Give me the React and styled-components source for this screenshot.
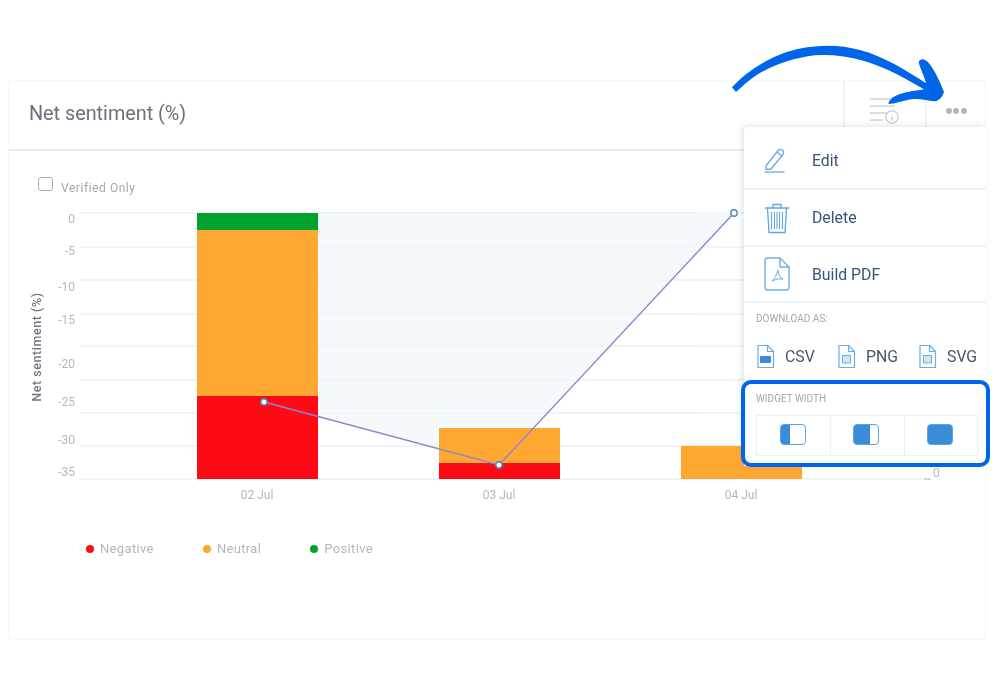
import React from 'react'
import styled, { createGlobalStyle } from 'styled-components'

const GlobalStyle = createGlobalStyle`
  html, body { margin: 0; padding: 0; background: #fff; }
  body { font-family: Roboto, "Liberation Sans", sans-serif; }
`

const Page = styled.div`
  width: 1000px;
  height: 700px;
  padding: 80px 0 0 8px;
  box-sizing: border-box;
  position: relative;
  overflow: hidden;
`

const Card = styled.div`
  width: 978px;
  height: 560px;
  box-sizing: border-box;
  border: 1px solid #f6f6f8;
  border-radius: 4px;
  position: relative;
  filter: blur(0.6px);
`

const Header = styled.div`
  height: 70px;
  box-sizing: border-box;
  display: flex;
  align-items: center;
  border-bottom: 2px solid #e8ecf0;
`

const Title = styled.h1`
  flex: 1;
  margin: 0 0 3px 20px;
  font-size: 19.8px;
  font-weight: 400;
  color: #69727c;
`

const HeaderCell = styled.div`
  width: ${p => p.$width}px;
  height: 100%;
  box-sizing: border-box;
  display: flex;
  justify-content: center;
  padding-top: 16px;
  border-left: 2px solid #eef1f5;
`

const Dots = styled.div`
  display: flex;
  gap: 1.5px;
  margin-top: 11px;
  height: 6px;
  & > i { width: 6px; height: 6px; border-radius: 50%; background: #b2b5ba; }
`

const FilterRow = styled.label`
  display: flex;
  align-items: center;
  gap: 8px;
  margin: 26px 0 13px 29px;
  height: 15px;
  font-size: 12px;
  letter-spacing: 0.55px;
  color: #a3a8ae;
  & > em { font-style: normal; padding-top: 6px; }
`

const Checkbox = styled.span`
  width: 13px;
  height: 12px;
  margin-top: -2px;
  border: 1.5px solid #a9adb2;
  border-radius: 3px;
  background: #fff;
`

const ChartSvg = styled.svg`
  display: block;
  width: 976px;
  height: 300px;
`

const AxisLabel = styled.text`
  font-size: 12px;
  fill: #b3b7bc;
`

const AxisTitle = styled.text`
  font-size: 12.5px;
  letter-spacing: 0.55px;
  font-weight: 500;
  fill: #6d7680;
`

const Legend = styled.div`
  display: flex;
  gap: 49px;
  margin: 36px 0 0 77px;
`

const LegendItem = styled.div`
  display: flex;
  align-items: center;
  gap: 6px;
  font-size: 13px;
  letter-spacing: 0.35px;
  color: #b3b7bc;
`

const LegendDot = styled.span`
  width: 8px;
  height: 8px;
  border-radius: 50%;
  background: ${p => p.$color};
`

const Menu = styled.div`
  position: absolute;
  top: 46px;
  right: -1px;
  width: 242px;
  height: 339px;
  background: #fff;
  border-radius: 4px 4px 0 0;
  box-shadow: -2px -1px 6px rgba(120, 130, 145, 0.22);
`

const MenuRow = styled.div`
  height: ${p => p.$height}px;
  box-sizing: border-box;
  display: flex;
  align-items: center;
  padding: ${p => p.$pushDown || 0}px 0 0 20px;
  border-bottom: 2px solid #eaf4f9;
  font-size: 15.8px;
  color: #34557a;
`

const RowIcon = styled.span`
  width: 48px;
  display: flex;
`

const SectionLabel = styled.div`
  padding-left: 12px;
  font-size: 10px;
  line-height: 12px;
  color: #a2a7ad;
  text-transform: uppercase;
`

const DownloadSection = styled.div`
  height: 77px;
  box-sizing: border-box;
  padding-top: 10px;
`

const DownloadRow = styled.div`
  display: grid;
  grid-template-columns: 81px 81px 1fr;
  padding-left: 12px;
  margin-top: 19px;
`

const DownloadItem = styled.div`
  display: flex;
  align-items: center;
  gap: 10px;
  font-size: 15.8px;
  color: #44566c;
`

const WidthSection = styled.div`
  padding-top: 13px;
`

const WidthGrid = styled.div`
  display: grid;
  grid-template-columns: repeat(3, 1fr);
  margin: 10px 8px 0 12px;
  height: 41px;
  box-sizing: border-box;
  border: 1px solid #e6f1f8;
`

const WidthCell = styled.div`
  display: flex;
  align-items: center;
  justify-content: center;
  padding: 0 2px 3px 0;
  & + & { border-left: 1px solid #e6f1f8; }
`

const WidthIcon = styled.span`
  width: 26px;
  height: 21px;
  box-sizing: border-box;
  border: 1.5px solid #5ba3e3;
  border-radius: 4px;
  background: linear-gradient(to right, #3a8cd9 ${p => p.$fill}%, #fff ${p => p.$fill}%);
`

const Highlight = styled.div`
  position: absolute;
  left: -3px;
  top: 253px;
  width: 249px;
  height: 87px;
  box-sizing: border-box;
  border: 4px solid #0065e8;
  border-radius: 10px;
  pointer-events: none;
`

const Arrow = styled.svg`
  position: absolute;
  left: 720px;
  top: 30px;
  width: 280px;
  height: 190px;
`

const GRID_Y = [213, 247, 280, 314, 346, 380, 413, 446, 479]
const TICKS = [['0', 223], ['-5', 255], ['-10', 291], ['-15', 324], ['-20', 368], ['-25', 406], ['-30', 444], ['-35', 476]]
const BARS = [
  { x: 197, label: '02 Jul', parts: [[213, 230, '#00a32e'], [230, 396, '#ffa733'], [396, 479, '#ff0a14']] },
  { x: 439, label: '03 Jul', parts: [[428, 463, '#ffa733'], [463, 479, '#ff0a14']] },
  { x: 681, label: '04 Jul', parts: [[446, 479, '#ffa733']] },
]
const LINE = [[264, 402], [499, 465], [734, 213]]
const LEGEND = [['Negative', '#ff0a14'], ['Neutral', '#ffa733'], ['Positive', '#00a32e']]

const Chart = () => (
  <ChartSvg viewBox="9 205 976 300">
    {GRID_Y.map(y => <line key={y} x1="80" x2="930" y1={y} y2={y} stroke="#eef0f3" strokeWidth="1.6" />)}
    <polygon points="264,213 734,213 499,465 264,402" fill="#f5f9fc" />
    {GRID_Y.map(y => <line key={y} x1="318" x2="700" y1={y} y2={y} stroke="#edf1f5" strokeWidth="1.2" />)}
    {TICKS.map(([t, y]) => <AxisLabel key={t} x="75" y={y} textAnchor="end">{t}</AxisLabel>)}
    <AxisTitle transform="translate(41 347) rotate(-90)" textAnchor="middle">Net sentiment (%)</AxisTitle>
    {BARS.map(b => (
      <g key={b.label}>
        {b.parts.map(([y1, y2, c]) => <rect key={c} x={b.x} y={y1} width="121" height={y2 - y1} fill={c} />)}
        <AxisLabel x={b.x + 60} y="499" textAnchor="middle">{b.label}</AxisLabel>
      </g>
    ))}
    <polyline points={LINE.join(' ')} fill="none" stroke="#8f86c9" strokeWidth="1.4" />
    {LINE.map(([x, y]) => <circle key={x} cx={x} cy={y} r="3.2" fill="#fff" stroke="#4d86b8" strokeWidth="1.4" />)}
    <AxisLabel x="933" y="477">0</AxisLabel>
    <line x1="924" x2="931" y1="479" y2="479" stroke="#b5b9be" strokeWidth="1" />
  </ChartSvg>
)

const ListInfoIcon = () => (
  <svg width="32" height="28" viewBox="0 0 32 28" fill="none" stroke="#d0d3d7" strokeWidth="1.5">
    <path d="M1 2h25M1 9h25M1 16h17M1 23h13" />
    <circle cx="23" cy="20" r="6.2" />
    <path d="M23 17.5v.6M23 19.5v4" />
  </svg>
)

const PencilIcon = () => (
  <svg width="22" height="26" viewBox="0 0 22 26" fill="none" stroke="#65aae4" strokeWidth="1.3" strokeLinejoin="round">
    <path d="M2 19 L14 3.5 Q16 1.5 18.5 3 Q20.5 5 19 7.5 L7 22 L2 22.5 Z" />
    <path d="M13 5 L17.8 9" />
    <path d="M0.5 25h20" />
  </svg>
)

const TrashIcon = () => (
  <svg width="26" height="32" viewBox="0 0 26 32" fill="none" stroke="#5ea6e2" strokeWidth="1.3">
    <path d="M1 6h24M9 6V2.5h8V6" />
    <path d="M3.5 6.5 L5 30.5h16 L22.5 6.5" />
    <path d="M7.5 10v17M10.5 10v17M13 10v17M15.5 10v17M18.5 10v17" strokeWidth="1.1" />
  </svg>
)

const PdfIcon = () => (
  <svg width="26" height="34" viewBox="0 0 26 34" fill="none" stroke="#6aaee6" strokeWidth="1.4" strokeLinejoin="round">
    <path d="M3.5 1 H16 L25 10 V30 Q25 33 22 33 H4 Q1 33 1 30 V4 Q1 1 3.5 1 Z" />
    <path d="M16 1 V10 H25" />
    <path d="M8 24 Q12 21 14 13 Q14.5 20 19 22 Q13 21 8 24 Z" strokeWidth="1" />
  </svg>
)

const FileIcon = ({ solid }) => (
  <svg width="19" height="25" viewBox="0 0 19 25" fill="none" stroke="#67ace6" strokeWidth="1.2" strokeLinejoin="round">
    <path d="M2 1.5 H11.5 L17.5 7.5 V23.5 H2 Z" />
    <path d="M11.5 1.5 V7.5 H17.5" />
    {solid
      ? <rect x="4" y="12" width="11" height="7" rx="1" fill="#3a8cd9" stroke="none" />
      : <rect x="5.5" y="11.5" width="8" height="7.5" fill="#cfe5f7" strokeWidth="1" />}
  </svg>
)

const App = () => (
  <Page>
    <GlobalStyle />
    <Card>
      <Header>
        <Title>Net sentiment (%)</Title>
        <HeaderCell $width={82}><ListInfoIcon /></HeaderCell>
        <HeaderCell $width={60}><Dots><i /><i /><i /></Dots></HeaderCell>
      </Header>
      <FilterRow><Checkbox /><em>Verified Only</em></FilterRow>
      <Chart />
      <Legend>
        {LEGEND.map(([name, color]) => (
          <LegendItem key={name}><LegendDot $color={color} />{name}</LegendItem>
        ))}
      </Legend>
      <Menu>
        <MenuRow $height={63} $pushDown={5}><RowIcon><PencilIcon /></RowIcon>Edit</MenuRow>
        <MenuRow $height={57}><RowIcon><TrashIcon /></RowIcon>Delete</MenuRow>
        <MenuRow $height={56}><RowIcon><PdfIcon /></RowIcon>Build PDF</MenuRow>
        <DownloadSection>
          <SectionLabel>Download as:</SectionLabel>
          <DownloadRow>
            <DownloadItem><FileIcon solid />CSV</DownloadItem>
            <DownloadItem><FileIcon />PNG</DownloadItem>
            <DownloadItem><FileIcon />SVG</DownloadItem>
          </DownloadRow>
        </DownloadSection>
        <WidthSection>
          <SectionLabel>Widget width</SectionLabel>
          <WidthGrid>
            <WidthCell><WidthIcon $fill={36} /></WidthCell>
            <WidthCell><WidthIcon $fill={66} /></WidthCell>
            <WidthCell><WidthIcon $fill={100} /></WidthCell>
          </WidthGrid>
        </WidthSection>
        <Highlight />
      </Menu>
    </Card>
    <Arrow viewBox="0 0 840 570">
      <path
        fill="#0065e8"
        d="M36 172 C70 135 125 92 200 66 C270 44 350 40 420 60 C495 80 565 125 618 160
           C612 135 600 115 596 96 C602 84 612 86 626 98 C645 122 660 155 672 186
           C668 200 658 212 645 214 C620 212 600 205 575 208 C550 212 525 222 505 222
           C508 208 518 200 540 192 C565 184 590 182 612 178
           C565 150 500 112 430 92 C380 78 330 72 285 76 C220 84 160 104 110 135 C85 152 65 170 48 186 Z"
      />
    </Arrow>
  </Page>
)

export default App
